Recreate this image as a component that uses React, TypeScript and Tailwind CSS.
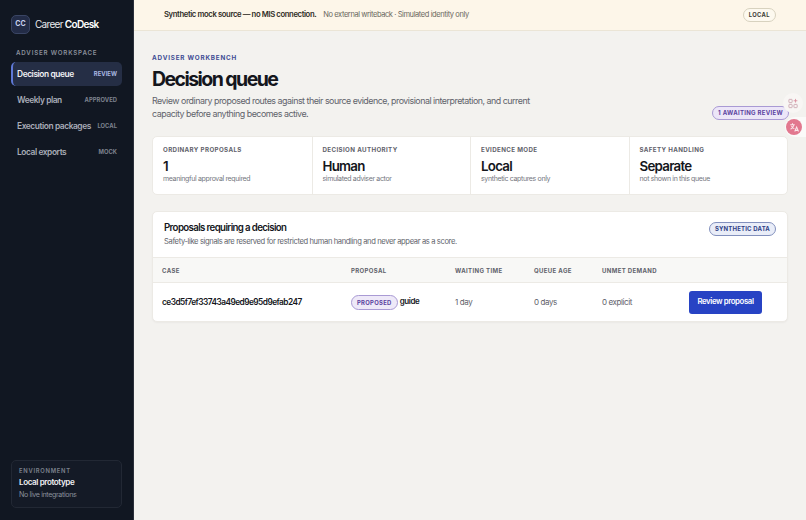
const font = { fontFamily: 'Inter, "Liberation Sans", sans-serif' };

const navItems = [
  { label: 'Decision queue', tag: 'REVIEW', active: true },
  { label: 'Weekly plan', tag: 'APPROVED', active: false },
  { label: 'Execution packages', tag: 'LOCAL', active: false },
  { label: 'Local exports', tag: 'MOCK', active: false },
];

const stats = [
  { label: 'ORDINARY PROPOSALS', value: '1', note: 'meaningful approval required' },
  { label: 'DECISION AUTHORITY', value: 'Human', note: 'simulated adviser actor' },
  { label: 'EVIDENCE MODE', value: 'Local', note: 'synthetic captures only' },
  { label: 'SAFETY HANDLING', value: 'Separate', note: 'not shown in this queue' },
];

function Sidebar() {
  return (
    <aside className="flex h-[520px] w-[134px] shrink-0 flex-col border-r border-[#2a2f3a] bg-[#111722] px-[11px] pb-[12px] pt-[15px]">
      <div className="flex items-center gap-[5px]">
        <div className="flex h-[19px] w-[19px] items-center justify-center rounded-[5px] border border-[#3a4564] bg-[#232c47] text-[7px] font-bold tracking-[0.02em] text-[#c9d2ee]">
          CC
        </div>
        <div className="whitespace-nowrap text-[10px] tracking-[-0.07em] text-[#e8e9ec]">
          Career <span className="font-semibold text-white">CoDesk</span>
        </div>
      </div>
      <div className="mt-[15px] pl-[5px] text-[6.2px] font-semibold leading-[8px] tracking-[0.13em] text-[#8b909c]">
        ADVISER WORKSPACE
      </div>
      <nav className="mt-[5px] flex flex-col gap-[2px]">
        {navItems.map((item) => (
          <div
            key={item.label}
            className={
              item.active
                ? 'flex h-[24px] items-center justify-between rounded-[5px] border-l-2 border-[#5e78d6] bg-[#252e45] pl-[4px] pr-[5px]'
                : 'flex h-[24px] items-center justify-between rounded-[5px] pl-[6px] pr-[5px]'
            }
          >
            <span className={item.active ? 'whitespace-nowrap text-[8.4px] font-semibold tracking-[-0.05em] text-[#f0f1f4]' : 'whitespace-nowrap text-[8.4px] font-semibold tracking-[-0.05em] text-[#a9adb8]'}>
              {item.label}
            </span>
            <span className={item.active ? 'text-[5.8px] font-bold tracking-[0.01em] text-[#aab8e2]' : 'text-[5.8px] font-bold tracking-[0.01em] text-[#7e838f]'}>
              {item.tag}
            </span>
          </div>
        ))}
      </nav>
      <div className="mt-auto h-[48px] rounded-[5px] border border-[#222834] bg-[#141a26] px-[7px] pt-[6px]">
        <div className="text-[5.8px] font-semibold leading-[8px] tracking-[0.13em] text-[#7e838f]">ENVIRONMENT</div>
        <div className="mt-[2px] text-[8.1px] font-semibold leading-[11px] tracking-[-0.05em] text-[#f0f1f4]">Local prototype</div>
        <div className="mt-[1px] text-[7.1px] leading-[11px] tracking-[-0.05em] text-[#8b909c]">No live integrations</div>
      </div>
    </aside>
  );
}

export default function App() {
  return (
    <div className="relative flex h-[520px] w-[806px] overflow-hidden bg-[#f3f2ef] text-[#14161c]" style={font}>
      <Sidebar />

      <main className="min-w-0 flex-1">
        {/* Banner */}
        <div className="flex h-[31px] items-center justify-between border-b border-[#ebe5d6] bg-[#fdf6e9] pl-[30px] pr-[30px]">
          <div className="flex items-center gap-[7px]">
            <span className="text-[7.7px] font-semibold tracking-[-0.05em] text-[#2f2c26]">Synthetic mock source — no MIS connection.</span>
            <span className="text-[7.5px] tracking-[-0.055em] text-[#6a6860]">No external writeback · Simulated identity only</span>
          </div>
          <span className="rounded-full border border-[#d8d2bf] bg-[#fdf9ef] px-[5px] py-[3px] text-[5.8px] font-bold leading-[6px] tracking-[0.07em] text-[#3c3a34]">
            LOCAL
          </span>
        </div>

        <div className="px-[18px] pt-[23px]">
          {/* Heading */}
          <div className="text-[6.3px] font-bold leading-[9px] tracking-[0.13em] text-[#3d4c94]">ADVISER WORKBENCH</div>
          <h1 className="mt-[1px] text-[19.5px] font-bold leading-[30px] tracking-[-0.08em] text-[#14161c]">Decision queue</h1>
          <div className="flex items-end justify-between">
            <p className="w-[385px] text-[8.9px] leading-[13px] tracking-[-0.055em] text-[#5f626b]">
              Review ordinary proposed routes against their source evidence, provisional interpretation, and current capacity before anything becomes active.
            </p>
            <span className="-mr-[1px] rounded-full border border-[#a99ad4] bg-[#ece6f8] px-[5px] py-[3px] text-[6px] font-bold leading-[6px] tracking-[0.05em] text-[#5b439f]">
              1 AWAITING REVIEW
            </span>
          </div>

          {/* Stats */}
          <div className="mt-[16px] grid h-[59px] grid-cols-4 rounded-[5px] border border-[#eceae5] bg-white">
            {stats.map((s, i) => (
              <div key={s.label} className={i === 0 ? 'pl-[10px] pt-[9px]' : 'border-l border-[#eceae5] pl-[10px] pt-[9px]'}>
                <div className="text-[6.2px] font-bold leading-[8px] tracking-[0.06em] text-[#5f626b]">{s.label}</div>
                <div className="mt-[4px] text-[13.3px] font-semibold leading-[16px] tracking-[-0.055em] text-[#14161c]">{s.value}</div>
                <div className="text-[7px] leading-[10px] tracking-[-0.05em] text-[#74767e]">{s.note}</div>
              </div>
            ))}
          </div>

          {/* Proposals */}
          <section className="mt-[16px] rounded-[5px] border border-[#eceae5] bg-white shadow-[0_1px_2px_rgba(0,0,0,0.04)]">
            <div className="flex h-[45px] items-start justify-between pl-[11px] pr-[11px] pt-[9px]">
              <div>
                <h2 className="text-[9.7px] font-semibold leading-[13px] tracking-[-0.065em] text-[#14161c]">Proposals requiring a decision</h2>
                <p className="mt-[2px] text-[7.6px] leading-[11px] tracking-[-0.05em] text-[#62646c]">
                  Safety-like signals are reserved for restricted human handling and never appear as a score.
                </p>
              </div>
              <span className="mt-[1px] rounded-full border border-[#8290bd] bg-[#e9edf8] px-[5px] py-[3px] text-[6px] font-bold leading-[6px] tracking-[0.03em] text-[#2f3f86]">
                SYNTHETIC DATA
              </span>
            </div>
            <div className="flex h-[26px] items-center border-y border-[#eceae5] bg-[#f8f8f6] pl-[9px] text-[6px] font-bold tracking-[0.06em] text-[#5f626b]">
              <div className="w-[189px]">CASE</div>
              <div className="w-[104px]">PROPOSAL</div>
              <div className="w-[79px]">WAITING TIME</div>
              <div className="w-[68px]">QUEUE AGE</div>
              <div>UNMET DEMAND</div>
            </div>
            <div className="flex h-[38px] items-center pl-[9px] text-[8px] tracking-[-0.05em] text-[#5f626b]">
              <div className="w-[189px] text-[8.3px] font-semibold tracking-[-0.065em] text-[#14161c]">ce3d5f7ef33743a49ed9e95d9efab247</div>
              <div className="flex w-[104px] items-center gap-[2px]">
                <span className="rounded-full border border-[#a99ad4] bg-[#eee9f8] px-[5px] py-[3px] text-[5.9px] font-bold leading-[7px] tracking-[0.05em] text-[#5b439f]">
                  PROPOSED
                </span>
                <span className="mb-[2px] text-[8px] font-semibold text-[#14161c]">guide</span>
              </div>
              <div className="w-[79px]">1 day</div>
              <div className="w-[68px]">0 days</div>
              <div className="w-[87px]">0 explicit</div>
              <button className="h-[23px] w-[73px] rounded-[3px] bg-[#2743c4] text-[7.8px] font-semibold tracking-[-0.05em] text-white">
                Review proposal
              </button>
            </div>
          </section>
        </div>
      </main>

      {/* Floating browser widgets */}
      <div className="absolute right-[3px] top-[93px] flex h-[20px] w-[20px] items-center justify-center rounded-full bg-[#f8f6f4]">
        <svg viewBox="0 0 12 12" className="h-[11px] w-[11px]" fill="none" stroke="#c9a3ae" strokeWidth="0.9">
          <rect x="1" y="1.500" width="3.500" height="3.500" rx="0.5" />
          <rect x="1" y="7" width="3.500" height="3.500" rx="0.5" />
          <rect x="6.500" y="7" width="3.500" height="3.500" rx="0.5" />
          <path d="M8.200 1v4M6.200 3h4" stroke="#d98a9c" />
        </svg>
      </div>
      <div className="absolute right-0 top-[117px] h-[20px] w-[21px] rounded-l-full bg-[#fbfaf9]" />
      <div className="absolute right-[4px] top-[119px] flex h-[16px] w-[16px] items-center justify-center rounded-full bg-[#e2788f]">
        <svg viewBox="0 0 16 16" className="h-[12px] w-[12px]" fill="none" stroke="#fbe6ea" strokeWidth="1.4">
          <path d="M3 5h6M6 3v2M8 5c-.5 2.500-2 4.500-4.500 6M4.500 6.500c1 2 2.500 3.200 4 4M9 14l2.500-6 2.500 6M10 12.500h3" />
        </svg>
      </div>
    </div>
  );
}
